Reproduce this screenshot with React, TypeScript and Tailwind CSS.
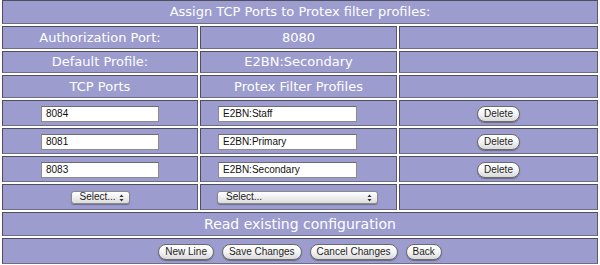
import React from "react";

const cell =
  "bg-[#9c9ccf] border border-[#4d4d5e] border-b-[#6e6e82] border-r-[#5a5a6c] text-white text-center p-0";

function PillButton({ label }: { label: string }) {
  return (
    <button
      type="button"
      className="inline-flex items-center justify-center h-[16px] px-[6px] rounded-full border border-[#6b6b6b] bg-gradient-to-b from-white via-[#f4f4f4] to-[#d9d9d9] text-[10px] leading-none text-[#1e1e1e] shadow-[0_1px_1px_rgba(0,0,0,0.35)] font-['Liberation_Sans',Arial,sans-serif]"
    >
      {label}
    </button>
  );
}

function FakeSelect({ width }: { width: string }) {
  return (
    <div
      className={`relative inline-flex items-center h-[13px] ${width} rounded-[3px] border border-[#8a8a8a] bg-gradient-to-b from-white to-[#dedede] shadow-[0_1px_1px_rgba(0,0,0,0.3)] text-left`}
    >
      <span className="pl-[8px] text-[10px] leading-none text-[#222] font-['Liberation_Sans',Arial,sans-serif]">
        Select...
      </span>
      <svg
        className="absolute right-[5px] top-[2px]"
        width="5"
        height="8"
        viewBox="0 0 5 8"
      >
        <path d="M0.5 3 L2.5 0.5 L4.5 3 Z" fill="#333" />
        <path d="M0.5 5 L2.5 7.5 L4.5 5 Z" fill="#333" />
      </svg>
    </div>
  );
}

function TextBox({ value, width }: { value: string; width: string }) {
  return (
    <input
      readOnly
      value={value}
      className={`h-[16px] ${width} bg-white border border-[#8c8c8c] border-t-[#6c6c6c] px-[4px] text-[10px] text-[#111] outline-none font-['Liberation_Sans',Arial,sans-serif]`}
    />
  );
}

const rows = [
  { port: "8084", profile: "E2BN:Staff" },
  { port: "8081", profile: "E2BN:Primary" },
  { port: "8083", profile: "E2BN:Secondary" },
];

export default function App() {
  return (
    <div className="w-[600px] h-[265px] bg-white overflow-hidden">
      <table className="w-[600px] -mt-[2px] border-separate border-spacing-[2px] border-b border-[#8a8a8a] font-['DejaVu_Sans',Verdana,sans-serif] text-[13px]">
        <tbody>
          <tr className="h-[24px]">
            <td colSpan={3} className={cell}>
              Assign TCP Ports to Protex filter profiles:
            </td>
          </tr>
          <tr className="h-[23px]">
            <td className={`${cell} w-[196px]`}>Authorization Port:</td>
            <td className={`${cell} w-[197px]`}>8080</td>
            <td className={cell}></td>
          </tr>
          <tr className="h-[22px]">
            <td className={cell}>Default Profile:</td>
            <td className={cell}>E2BN:Secondary</td>
            <td className={cell}></td>
          </tr>
          <tr className="h-[23px]">
            <td className={cell}>TCP Ports</td>
            <td className={cell}>Protex Filter Profiles</td>
            <td className={cell}></td>
          </tr>
          {rows.map((r) => (
            <tr key={r.port} className="h-[26px]">
              <td className={cell}>
                <div className="flex justify-center pt-[1px]">
                  <TextBox value={r.port} width="w-[118px]" />
                </div>
              </td>
              <td className={cell}>
                <div className="flex justify-start pl-[17px] pt-[1px]">
                  <TextBox value={r.profile} width="w-[139px]" />
                </div>
              </td>
              <td className={cell}>
                <PillButton label="Delete" />
              </td>
            </tr>
          ))}
          <tr className="h-[26px]">
            <td className={cell}>
              <div className="flex justify-center">
                <FakeSelect width="w-[59px]" />
              </div>
            </td>
            <td className={cell}>
              <div className="flex justify-start pl-[16px]">
                <FakeSelect width="w-[161px]" />
              </div>
            </td>
            <td className={cell}></td>
          </tr>
          <tr className="h-[24px]">
            <td colSpan={3} className={`${cell} text-[14px]`}>
              Read existing configuration
            </td>
          </tr>
          <tr className="h-[26px]">
            <td colSpan={3} className={cell}>
              <div className="flex justify-center gap-[8px] pt-[2px]">
                <PillButton label="New Line" />
                <PillButton label="Save Changes" />
                <PillButton label="Cancel Changes" />
                <PillButton label="Back" />
              </div>
            </td>
          </tr>
        </tbody>
      </table>
    </div>
  );
}
